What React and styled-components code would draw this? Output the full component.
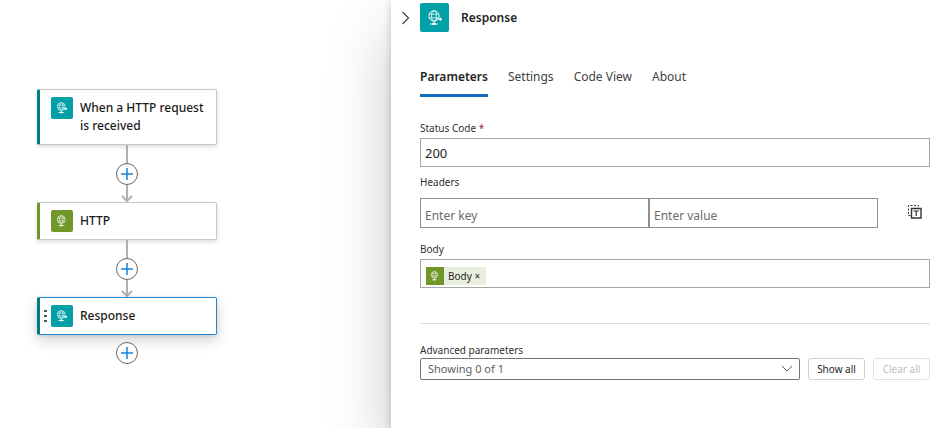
import React, { useState } from "react";
import styled, { createGlobalStyle, css } from "styled-components";

const TEAL = "#00a0a6";
const GREEN = "#709727";

const GlobalStyle = createGlobalStyle`
  *, *::before, *::after { box-sizing: border-box; }
  body {
    margin: 0;
    background: #fff;
    color: #242424;
    font-family: "Segoe UI", "Noto Sans", "Open Sans", sans-serif;
    font-size: 12px;
    overflow: hidden;
  }
  button, input, select { font: inherit; color: inherit; }
`;

const Page = styled.div`
  display: grid;
  grid-template-columns: 391fr 545fr;
  min-height: 100vh;
`;

const Canvas = styled.main`
  padding: 89px 37px 0;
`;

const Flow = styled.div`
  display: flex;
  flex-direction: column;
  align-items: center;
  width: 180px;
`;

const Card = styled.article`
  display: flex;
  align-items: flex-start;
  width: 100%;
  padding: 7px 8px 7px 0;
  background: #fff;
  border: 1px solid ${(p) => (p.$selected ? "#1f86d8" : "#c8c8c8")};
  border-left: 3px solid ${(p) => p.$accent};
  border-radius: 2px;
  box-shadow: ${(p) =>
    p.$selected
      ? "0 6px 14px rgba(0, 0, 0, 0.16), 0 1px 4px rgba(0, 0, 0, 0.12)"
      : "0 2px 4px rgba(0, 0, 0, 0.14)"};
`;

const Grip = styled.span`
  display: flex;
  flex: none;
  justify-content: center;
  align-items: center;
  width: 11px;
  height: 22px;
`;

const IconTile = styled.span`
  display: flex;
  flex: none;
  align-items: center;
  justify-content: center;
  width: ${(p) => p.$size}px;
  height: ${(p) => p.$size}px;
  background: ${(p) => p.$color};
  border-radius: ${(p) => (p.$square ? 0 : 2)}px;
`;

const CardTitle = styled.h2`
  margin: 2px 0 2px 7px;
  font-size: 12px;
  font-weight: 500;
  line-height: 18px;
  color: #1b1a19;
`;

const Connector = styled.div`
  display: flex;
  flex-direction: column;
  align-items: center;
`;

const Line = styled.span`
  width: 2px;
  height: 18px;
  background: #b3b0b3;
`;

const Arrow = styled.svg`
  display: block;
`;

const AddButton = styled.button`
  display: flex;
  align-items: center;
  justify-content: center;
  width: 22px;
  height: 22px;
  padding: 0;
  background: #fff;
  border: 1px solid #666;
  border-radius: 50%;
`;

const LastStep = styled.div`
  padding-top: 7px;
`;

const Panel = styled.aside`
  padding: 3px 6px 0 9px;
  background: #fff;
  box-shadow: 0 0 8px rgba(0, 0, 0, 0.2), 0 32px 60px rgba(0, 0, 0, 0.22);
`;

const PanelHeader = styled.header`
  display: flex;
  align-items: center;
`;

const CollapseButton = styled.button`
  display: flex;
  align-items: center;
  width: 20px;
  height: 28px;
  padding: 0 0 0 1px;
  background: none;
  border: 0;
`;

const PanelTitle = styled.h1`
  margin: 0 0 0 12px;
  font-size: 12px;
  font-weight: 600;
  line-height: 20px;
`;

const PanelBody = styled.div`
  padding-left: 20px;
`;

const Tabs = styled.div`
  display: flex;
  gap: 20px;
  margin-top: 34px;
`;

const Tab = styled.button`
  height: 31px;
  padding: 0 0 6px;
  background: none;
  border: 0;
  border-bottom: 3px solid transparent;
  line-height: 20px;
  color: #424242;
  ${(p) =>
    p.$active &&
    css`
      color: #242424;
      font-weight: 600;
      border-bottom-color: #0f6cbd;
    `}
`;

const Form = styled.form`
  display: flex;
  flex-direction: column;
  margin-top: 23px;
`;

const Label = styled.label`
  font-size: 10px;
  line-height: 16px;
  color: #323130;
`;

const Required = styled.span`
  color: #a4262c;
`;

const TextInput = styled.input`
  width: 100%;
  height: 29px;
  margin: 2px 0 7px;
  padding: 0 4px;
  background: #fff;
  border: 1px solid #a6a6a6;
  border-radius: 0;
  font-size: 13px;
`;

const HeadersRow = styled.div`
  display: grid;
  grid-template-columns: 1fr 1fr 52px;
  align-items: center;
  margin: 8px 0 13px;
`;

const HeaderInput = styled.input`
  min-width: 0;
  height: 30px;
  padding: 4px 4px 0;
  background: #fff;
  border: 1px solid #8f8f8f;
  border-radius: 0;
  &::placeholder { color: #6b6b6b; opacity: 1; }
`;

const ModeButton = styled.button`
  justify-self: end;
  display: flex;
  padding: 0;
  margin: 0 8px 2px 0;
  background: none;
  border: 0;
`;

const TokenField = styled.div`
  display: flex;
  align-items: flex-end;
  height: 29px;
  margin-top: 2px;
  padding: 0 5px 2px;
  border: 1px solid #a6a6a6;
`;

const Token = styled.span`
  display: flex;
  align-items: center;
  height: 18px;
  background: #e9efdf;
  font-size: 10px;
`;

const TokenText = styled.span`
  padding-left: 4px;
  line-height: 18px;
`;

const TokenRemove = styled.button`
  width: 14px;
  padding: 0 3px 0 0;
  background: none;
  border: 0;
  line-height: 18px;
`;

const TokenInput = styled.input`
  flex: 1;
  min-width: 0;
  height: 18px;
  padding: 0 4px;
  background: none;
  border: 0;
  outline: 0;
`;

const Divider = styled.hr`
  width: 100%;
  height: 1px;
  margin: 35px 0 18px;
  background: #dcdcdc;
  border: 0;
`;

const AdvancedRow = styled.div`
  display: flex;
  gap: 8px;
`;

const SelectBox = styled.div`
  display: grid;
  flex: 1;
  align-items: center;
  > * { grid-area: 1 / 1; }
  > svg { justify-self: end; margin-right: 7px; pointer-events: none; }
`;

const Select = styled.select`
  width: 100%;
  height: 22px;
  padding: 0 7px;
  appearance: none;
  background: #fff;
  border: 1px solid #767676;
  border-radius: 2px;
  font-size: 11px;
  line-height: 18px;
  color: #616161;
`;

const ActionButton = styled.button`
  width: 57px;
  height: 22px;
  padding: 0;
  background: #fff;
  border: 1px solid #d1d1d1;
  border-radius: 3px;
  font-size: 10px;
  &:disabled { color: #bdbdbd; border-color: #e0e0e0; }
`;

function GlobeIcon({ size, arrow }) {
  return (
    <svg width={size} height={size} viewBox="0 0 16 16" fill="none" stroke="#fff" strokeWidth="0.9" aria-hidden="true">
      <circle cx="7" cy="6" r="5.2" />
      <ellipse cx="7" cy="6" rx="2.4" ry="5.2" strokeWidth="0.8" />
      <path d="M2.3 4.1h9.4M2.3 7.9h9.4" strokeWidth="0.8" />
      <path d="M7 11.2v2.6M3 14h8" />
      <path d="M5.4 13h3.2v2H5.4z" fill="#fff" stroke="none" />
      {arrow && (
        <path d="M9.5 9.2h4.6M13 7.8l1.8 1.4-1.8 1.4z" fill="#fff" />
      )}
    </svg>
  );
}

function AddStep({ label }) {
  return (
    <AddButton type="button" aria-label={label}>
      <svg width="14" height="14" viewBox="0 0 14 14" stroke="#1683d8" strokeWidth="1.5" aria-hidden="true">
        <path d="M7 1v12M1 7h12" />
      </svg>
    </AddButton>
  );
}

function StepConnector() {
  return (
    <Connector>
      <Line />
      <AddStep label="Insert a new step" />
      <Arrow width="12" height="17" viewBox="0 0 12 17" fill="none" stroke="#b3b0b3" strokeWidth="2" aria-hidden="true">
        <path d="M6 0v16M1 11l5 5 5-5" />
      </Arrow>
    </Connector>
  );
}

function StepCard({ title, color, accent, arrow, selected }) {
  return (
    <Card $accent={accent} $selected={selected}>
      <Grip>
        {selected && (
          <svg width="3" height="12" viewBox="0 0 3 12" fill="#555" aria-hidden="true">
            <path d="M0 0h3v2H0zM0 5h3v2H0zM0 10h3v2H0z" />
          </svg>
        )}
      </Grip>
      <IconTile $size={22} $color={color}>
        <GlobeIcon size={12} arrow={arrow} />
      </IconTile>
      <CardTitle>{title}</CardTitle>
    </Card>
  );
}

const TABS = ["Parameters", "Settings", "Code View", "About"];

export default function App() {
  const [tab, setTab] = useState("Parameters");
  const [status, setStatus] = useState("200");
  return (
    <>
      <GlobalStyle />
      <Page>
        <Canvas>
          <Flow>
            <StepCard title="When a HTTP request is received" color={TEAL} accent="#007c85" arrow />
            <StepConnector />
            <StepCard title="HTTP" color={GREEN} accent={GREEN} />
            <StepConnector />
            <StepCard title="Response" color={TEAL} accent="#007c85" arrow selected />
            <LastStep>
              <AddStep label="Add an action" />
            </LastStep>
          </Flow>
        </Canvas>
        <Panel>
          <PanelHeader>
            <CollapseButton type="button" aria-label="Collapse panel">
              <svg width="9" height="14" viewBox="0 0 9 14" fill="none" stroke="#424242" strokeWidth="1.2" aria-hidden="true">
                <path d="M1.5 1l6 6-6 6" />
              </svg>
            </CollapseButton>
            <IconTile $size={29} $color={TEAL}>
              <GlobeIcon size={16} arrow />
            </IconTile>
            <PanelTitle>Response</PanelTitle>
          </PanelHeader>
          <PanelBody>
            <Tabs role="tablist">
              {TABS.map((name) => (
                <Tab
                  key={name}
                  type="button"
                  role="tab"
                  aria-selected={tab === name}
                  $active={tab === name}
                  onClick={() => setTab(name)}
                >
                  {name}
                </Tab>
              ))}
            </Tabs>
            <Form onSubmit={(e) => e.preventDefault()}>
              <Label htmlFor="status">
                Status Code <Required>*</Required>
              </Label>
              <TextInput id="status" value={status} onChange={(e) => setStatus(e.target.value)} />
              <Label htmlFor="header-key">Headers</Label>
              <HeadersRow>
                <HeaderInput id="header-key" placeholder="Enter key" />
                <HeaderInput aria-label="Header value" placeholder="Enter value" />
                <ModeButton type="button" aria-label="Switch to text mode">
                  <svg width="14" height="14" viewBox="0 0 14 14" fill="none" stroke="#333" aria-hidden="true">
                    <path d="M2.5 10.5h-2v-10h10v2" strokeDasharray="2 1.5" />
                    <path d="M3.5 3.5h9.5v9.5H3.5z" strokeWidth="1.4" />
                    <path d="M5.5 6h5.5M8.2 6v5" strokeWidth="1.2" />
                  </svg>
                </ModeButton>
              </HeadersRow>
              <Label htmlFor="body">Body</Label>
              <TokenField>
                <Token>
                  <IconTile $size={18} $color={GREEN} $square>
                    <GlobeIcon size={10} />
                  </IconTile>
                  <TokenText>Body</TokenText>
                  <TokenRemove type="button" aria-label="Remove Body">×</TokenRemove>
                </Token>
                <TokenInput id="body" />
              </TokenField>
              <Divider />
              <Label htmlFor="advanced">Advanced parameters</Label>
              <AdvancedRow>
                <SelectBox>
                  <Select id="advanced">
                    <option>Showing 0 of 1</option>
                  </Select>
                  <svg width="12" height="8" viewBox="0 0 12 8" fill="none" stroke="#616161" aria-hidden="true">
                    <path d="M1 1l5 5 5-5" />
                  </svg>
                </SelectBox>
                <ActionButton type="button">Show all</ActionButton>
                <ActionButton type="button" disabled>Clear all</ActionButton>
              </AdvancedRow>
            </Form>
          </PanelBody>
        </Panel>
      </Page>
    </>
  );
}
